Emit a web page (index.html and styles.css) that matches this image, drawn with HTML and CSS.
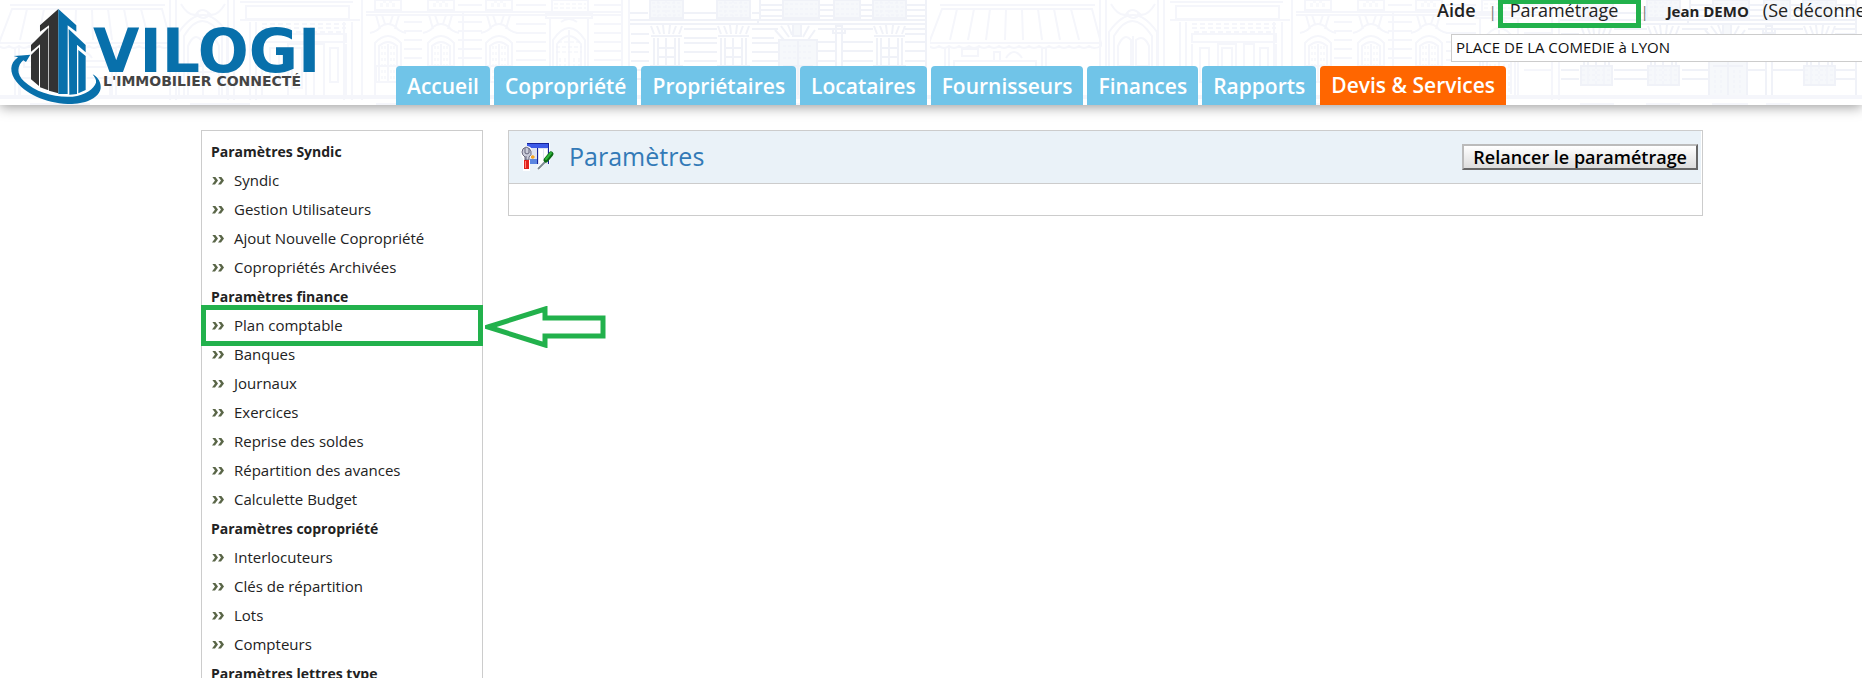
FILE: index.html
```html
<!DOCTYPE html>
<html lang="fr">
<head>
  <meta charset="UTF-8">
  <title>Vilogi - Paramètres</title>
  <meta name="viewport" content="width=device-width,initial-scale=1">
  <link rel="stylesheet" href="styles.css">
</head>
<body>
  <header class="header">
    <!-- facade drawing repeated behind the header -->
    <svg class="facade" aria-hidden="true">
      <defs>
        <g id="arch-window">
          <path d="M1 0h26v10h-26zM2 15l4 14M8 15l3 9M25 15l-4 14M19 15l-3 9M-4 33q8-2 10-6q8-6 16 0q2 4 10 6M1 98v-55q13-14 26 0v55M5 82v-36q9-8 18 0v36"/>
          <path class="fine" stroke-dasharray="3 3" d="M8 46v36M11 46v36M17 46v36M20 46v36M9 2h12M6 6h18M6 4h18"/>
          <path d="M14 44v38M2 66h24v16h-24z"/>
        </g>
        <g id="balcony">
          <path class="tint" d="M0 0h33v18h-33z"/>
          <path class="fine" stroke-dasharray="3 2" d="M2 3h29M3 7h28M2 11h29M3 15h27M8 0v18M16 0v18M24 0v18"/>
          <path d="M0 18h33M1 26l3 8M7 26l3 8M13 25l1 9M20 25l-1 9M26 26l-3 8M32 26l-3 8M1 36h31M4 38v46M29 38v46M8 38v28M25 38v28M16 38v28M8 48h17M8 57h17"/>
          <path class="tint" d="M1 66h31v19h-31z"/>
          <path class="fine" stroke-dasharray="3 2" d="M2 70h29M2 75h29M2 80h29M8 66v18M16 66v18M24 66v18"/>
        </g>
        <pattern id="street" width="930" height="105" patternUnits="userSpaceOnUse">
          <!-- shop awning -->
          <path d="M10 5h155M12 9h150l9 34h-172zM27 9l-7 31M44 9l-6 31M60 9l-4 31M76 9l-1 31M92 9l1 31M108 9l4 31M124 9l6 31M141 9l8 31M-1 43v3q5 4 10 0q5 4 10 0q5 4 10 0q5 4 10 0q5 4 10 0q5 4 10 0q5 4 10 0q5 4 10 0q5 4 10 0q5 4 10 0q5 4 10 0q5 4 10 0q5 4 10 0q5 4 10 0q5 4 10 0q5 4 10 0q5 4 12 0v-3"/>
          <path d="M15 47v52M19 47v52M112 47v52M116 47v52M32 49h16v7h-16zM24 61h82v6h-82zM64 60v-8h6v8M76 58q8-12 16 0M20 78h90v18h-90z"/>
          <!-- carriage door -->
          <path d="M170 0v100M176 0v100M228 0v100M234 0v100M179 98v-66q24-34 48 0v66M184 98v-62q18-30 38 0v62M188 66v-20q6-14 13-6v26zM206 66v-26q8-6 13 6v20zM188 72h31v24h-31zM203 36v62M196 14q6-8 14 0q-6 8-14 0M181 4q8 14 18 10M225 4q-8 14-18 10"/>
          <!-- shop front -->
          <path d="M240 2h113M246 6h103v13h-103zM240 20h120M250 22v78M256 22v78M344 22v78M352 22v78M262 34h84v8h-84zM262 44v54M346 44v54M270 48h9v34h-9zM288 44h18v54h-18zM292 48h10v40h-10zM314 44h10v54h-10zM330 48h8v34h-8z"/>
          <path stroke-dasharray="5 3" d="M262 24h84M262 28h84M264 32h80"/>
          <!-- stone building with arched windows -->
          <path d="M362 0v100M366 12h256M366 15h256M404 22h18M404 31h18M404 40h18M404 49h18M404 58h18M404 67h18M404 76h18M458 22h24M458 31h24M458 40h24M458 49h24M458 58h24M458 67h24M458 76h24M516 5h30M516 24h30M516 33h30M516 42h30M516 51h30M516 60h30M516 70h30M594 5h28M594 24h28M594 33h28M594 42h28M594 51h28M594 60h28M594 70h28M458 5h24M463 12v88"/>
          <use href="#arch-window" x="374"/><use href="#arch-window" x="427"/><use href="#arch-window" x="485"/>
          <path d="M546 13h46v5h-46zM550 98v-80M588 98v-80M553 98v-58q16-24 32 0v58M557 94v-50q12-16 24 0v50M569 30v64M552 0h36v12h-36zM561 22q8-6 16 0"/>
          <path class="fine" stroke-dasharray="4 2" d="M558 42h22M556 47h26M556 52h26M560 58v34M565 58v34M574 58v34M579 58v34M554 4h32M554 8h32"/>
          <path d="M622 0v100M629 0v100"/>
          <!-- right hand building -->
          <g class="strong">
            <path d="M630 13h18M684 13h34M752 13h8M630 20h130M630 24h130M631 34h18M631 43h18M631 52h18M631 61h18M631 70h18M631 79h18M684 29h33M684 38h33M684 43h33M684 52h33M684 61h33M684 70h33M684 79h33M752 29h26M752 38h22M752 43h26M752 52h26M752 61h26M752 70h26M752 79h26"/>
            <path d="M760 0v20M760 5h22M760 10h22M760 16h22M820 5h14M820 10h14M820 16h14M861 5h12M861 10h12M861 16h12M906 5h20M906 10h20M906 16h20M758 20h168v4h-168zM818 29h17M818 42h17M818 51h17M818 61h17M818 70h17M843 29h30M843 42h30M843 51h30M843 61h30M843 70h30M905 29h20M905 34h20M905 42h20M905 51h20M905 61h20M905 70h20M905 79h20M926 0v98"/>
            <use href="#balcony" x="650"/><use href="#balcony" x="717"/><use href="#balcony" x="873"/>
            <path class="tint" d="M783 0h36v18h-36zM834 0h26v18h-26zM779 40h38v56h-38zM793 24h8v12h-8z"/>
            <path d="M775 30l9 10M781 26l8 11M788 25l4 10M815 30l-7 10M809 26l-6 11M779 40v56M817 40v56M798 40v56M783 66h30M836 26h6v72h-6zM833 29h12v4h-12z"/>
            <path class="fine" stroke-dasharray="3 2" d="M785 4h32M785 9h32M785 14h32M836 4h22M836 9h22M836 14h22M783 46h30M783 52h30M783 58h30M785 70v24M791 70v24M804 70v24M810 70v24"/>
          </g>
          <path d="M0 96h930M0 98h930M30 104h60M190 104h60M376 104h40M430 104h36M650 104h34M716 104h34M782 104h36M836 104h24"/>
        </pattern>
      </defs>
      <rect width="100%" height="105" fill="url(#street)" stroke="none"/>
    </svg>

    <a class="logo" href="#">
      <svg width="330" height="105" viewBox="0 0 330 105" role="img" aria-label="Vilogi">
        <g transform="scale(.3333)">
          <path class="logo-halo" d="M175 27L257 90V150L262 280L175 300L93 250V150L120 80Z"/>
          <path class="logo-dark" d="M175 27L120 76V95L147 76V272L175 280ZM145 83L93 135V155L120 133V262L145 271ZM117 142L93 165V238L117 258Z"/>
          <path class="logo-blue" d="M175 27L229 76V95L203 76V282L175 282ZM206 87L257 135V157L231 134V282L208 284ZM235 150L257 168V270L235 280Z"/>
          <path class="logo-blue" d="M41 168Q62 166 91 164L78 186L70 181C52 196 48 222 72 244C108 278 166 294 218 290C256 286 282 266 288 248C290 240 284 232 278 223C296 232 304 250 302 265C298 292 262 311 216 312C148 312 84 288 50 246C28 218 28 190 54 172Z"/>
        </g>
        <text class="logo-name" x="93" y="72">VILOGI</text>
        <text class="logo-tag" x="103" y="86">L'IMMOBILIER CONNECTÉ</text>
      </svg>
    </a>

    <div class="header-main">
      <div class="account">
        <div class="account-links">
          <a class="help" href="#">Aide</a>
          <span class="sep">|</span>
          <a class="settings" href="#">Paramétrage</a>
          <span class="sep">|</span>
          <span class="user">Jean DEMO</span>
          <a class="logout" href="#">(Se déconnecter)</a>
        </div>
        <select class="building" aria-label="Copropriété">
          <option>PLACE DE LA COMEDIE à LYON</option>
        </select>
      </div>
      <nav class="tabs">
        <a href="#">Accueil</a>
        <a href="#">Copropriété</a>
        <a href="#">Propriétaires</a>
        <a href="#">Locataires</a>
        <a href="#">Fournisseurs</a>
        <a href="#">Finances</a>
        <a href="#">Rapports</a>
        <a class="services" href="#">Devis &amp; Services</a>
      </nav>
    </div>
  </header>

  <main class="page">
    <aside class="sidebar">
      <h2>Paramètres Syndic</h2>
      <ul>
        <li><a href="#">Syndic</a></li>
        <li><a href="#">Gestion Utilisateurs</a></li>
        <li><a href="#">Ajout Nouvelle Copropriété</a></li>
        <li><a href="#">Copropriétés Archivées</a></li>
      </ul>
      <h2>Paramètres finance</h2>
      <ul>
        <li class="marked">
          <a href="#">Plan comptable</a>
          <svg class="arrow" width="122" height="42" viewBox="0 0 122 42" aria-hidden="true">
            <path d="M3 21L60 3V12H118V30H60V39Z"/>
          </svg>
        </li>
        <li><a href="#">Banques</a></li>
        <li><a href="#">Journaux</a></li>
        <li><a href="#">Exercices</a></li>
        <li><a href="#">Reprise des soldes</a></li>
        <li><a href="#">Répartition des avances</a></li>
        <li><a href="#">Calculette Budget</a></li>
      </ul>
      <h2>Paramètres copropriété</h2>
      <ul>
        <li><a href="#">Interlocuteurs</a></li>
        <li><a href="#">Clés de répartition</a></li>
        <li><a href="#">Lots</a></li>
        <li><a href="#">Compteurs</a></li>
      </ul>
      <h2>Paramètres lettres type</h2>
    </aside>

    <section class="panel">
      <div class="panel-head">
        <svg class="panel-icon" width="34" height="30" viewBox="0 0 34 30" aria-hidden="true">
          <path fill="#fff" d="M6 1h23v21H6z"/>
          <path fill="#dfe4f2" d="M7 6h21v16H7z"/>
          <path fill="#3d5be8" d="M6 1h22v5H6z"/>
          <path fill="#16249a" d="M6 1h22v1H6zM27 2h1v20h-1zM16 6h1v16h-1z"/>
          <path fill="#5b86e0" d="M9 17h7v5H9z"/>
          <path fill="#fff" d="M18 7h4v14h-4zM23 7h3v14h-3z"/>
          <path fill="#f6a623" d="M10 14l2-1 2 2-2 2-2-1z"/>
          <path fill="#fff" d="M0 9q1-5 6-5q5 0 5 6l-2 7v12H2V17L0 13z"/>
          <path fill="#c9cbd8" stroke="#66667c" d="M5 5q-4 1-4 5q0 3 3 5v3h4v-3q3-2 2-6q-1-3-5-4z"/>
          <path fill="none" stroke="#66667c" d="M4 6v5l2 1 2-1V6M5 14v4"/>
          <path fill="#e2221c" d="M3 18h5v9H3z"/>
          <path fill="#ff8478" d="M4 19h1v7H4z"/>
          <path fill="none" stroke="#fff" stroke-width="4" d="M17 27L30 12"/>
          <path fill="none" stroke="#7d8b93" stroke-width="2" d="M17 27l8-8"/>
          <path fill="none" stroke="#0b6a14" stroke-width="5" stroke-linecap="round" d="M25 18l5-6"/>
          <path fill="none" stroke="#2fb53b" stroke-width="2" stroke-linecap="round" d="M25 17l5-6"/>
        </svg>
        <h1>Paramètres</h1>
        <button type="button" class="restart">Relancer le paramétrage</button>
      </div>
      <div class="panel-body"></div>
    </section>
  </main>
</body>
</html>
```
FILE: styles.css
```css
*,
*::before,
*::after {
  box-sizing: border-box;
}
body {
  margin: 0;
  background: #fff;
  color: #222;
  font-family: "Open Sans", "Noto Sans", sans-serif;
  font-size: 14px;
  overflow: hidden;
}
a {
  color: inherit;
  text-decoration: none;
}

/* header */
.header {
  position: relative;
  display: flex;
  height: 105px;
  background: #fff;
  box-shadow: 0 2px 12px #0006;
}
.facade {
  position: absolute;
  top: 0;
  left: 0;
  width: 100%;
  height: 105px;
  fill: none;
  stroke: #f5f6fb;
  stroke-width: 2;
}
.facade .fine {
  stroke: #f1f3f9;
  stroke-width: 1;
}
.facade .strong {
  stroke: #f0f2f8;
}
.facade .tint {
  fill: #f6f8fb;
}
.logo {
  position: relative;
  flex: 0 0 396px;
}
.logo-halo { fill: #fff; }
.logo-dark { fill: #333; }
.logo-blue { fill: #0870ab; }
.logo-name {
  fill: #0870ab;
  font: bold 60px "DejaVu Sans", sans-serif;
}
.logo-tag {
  fill: #444;
  font: bold 14px "DejaVu Sans", sans-serif;
}
.header-main {
  position: relative;
  flex: 1;
  min-width: 0;
  display: flex;
  flex-direction: column;
  justify-content: space-between;
}
.account {
  width: 425px;
  margin-left: auto;
}
.account-links {
  display: flex;
  align-items: baseline;
  height: 34px;
  line-height: 20px;
  font-size: 18px;
  white-space: nowrap;
}
.help {
  font-weight: 600;
}
.sep {
  margin: 0 13px;
  font-size: 15px;
  color: #777;
}
.settings {
  position: relative;
}
.settings::after {
  content: "";
  position: absolute;
  top: -1px;
  left: -12px;
  right: -23px;
  height: 29px;
  border: 5px solid #22b14c;
}
.settings + .sep {
  margin: 0 18px 0 22px;
}
.user {
  margin-right: 14px;
  font-size: 15px;
  font-weight: bold;
}
.building {
  display: block;
  width: 440px;
  height: 28px;
  margin-left: 14px;
  padding: 0 4px 2px;
  border: 1px solid #ccc;
  background: #fff;
  color: #111;
  font-family: inherit;
  font-size: 15px;
  appearance: none;
}
.tabs {
  display: flex;
  gap: 4px;
}
.tabs a {
  height: 39px;
  padding: 0 11px;
  border-radius: 4px 4px 0 0;
  background: #70c4e8;
  color: #fff;
  font-size: 21px;
  font-weight: 600;
  line-height: 40px;
  white-space: nowrap;
}
.tabs .services {
  background: #ff6600;
  line-height: 38px;
}

/* content */
.page {
  display: flex;
  align-items: flex-start;
  gap: 25px;
  padding: 25px 159px 0 201px;
}
.sidebar {
  flex: 0 0 282px;
  padding: 6px 0;
  border: 1px solid #ccc;
  line-height: 29px;
  font-size: 15px;
}
.sidebar h2 {
  margin: 0;
  padding-left: 9px;
  font-size: 14px;
  font-weight: bold;
}
.sidebar ul {
  margin: 0;
  padding: 0;
  list-style: none;
}
.sidebar li {
  position: relative;
  display: flex;
  align-items: center;
  padding-left: 10px;
}
.sidebar li::before {
  content: "";
  width: 12px;
  height: 8px;
  margin-right: 10px;
  background: #5a6648;
  clip-path: polygon(0 0, 25% 0, 50% 50%, 25% 100%, 0 100%, 25% 50%, 0 0, 50% 0, 75% 0, 100% 50%, 75% 100%, 50% 100%, 75% 50%, 50% 0);
}
.marked::after {
  content: "";
  position: absolute;
  top: -6px;
  left: -1px;
  right: -1px;
  height: 41px;
  border: 5px solid #22b14c;
}
.arrow {
  position: absolute;
  top: -5px;
  left: 100%;
  margin-left: 3px;
  fill: none;
  stroke: #22b14c;
  stroke-width: 5;
}
.panel {
  flex: 1;
  border: 1px solid #ccc;
  padding-right: 1px;
}
.panel-head {
  display: flex;
  align-items: center;
  height: 53px;
  padding: 0 3px 0 12px;
  border-bottom: 1px solid #ccc;
  background: #eaf2f8;
}
.panel-head h1 {
  margin: 0 auto 0 14px;
  padding-bottom: 3px;
  color: #337ab7;
  font-size: 25px;
  font-weight: normal;
  line-height: 34px;
}
.restart {
  height: 26px;
  padding: 0 9px;
  border: 2px outset #bbb;
  background: linear-gradient(#fff, #ddd);
  color: #000;
  font-family: inherit;
  font-size: 18px;
  font-weight: 600;
  line-height: 20px;
}
.panel-body {
  height: 31px;
}
```
